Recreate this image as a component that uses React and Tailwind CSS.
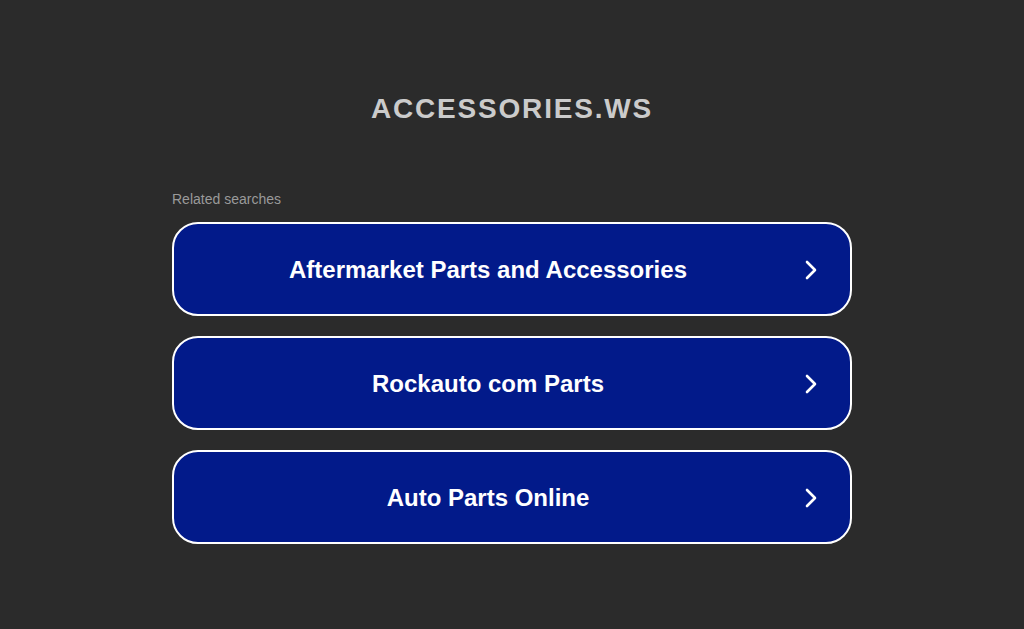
import React from 'react';

const SEARCHES = [
  'Aftermarket Parts and Accessories',
  'Rockauto com Parts',
  'Auto Parts Online',
];

const Chevron = () => (
  <svg width="14" height="22" viewBox="0 0 14 22" fill="none" className="shrink-0">
    <path d="M3 3l8 8-8 8" stroke="white" strokeWidth="2.6" strokeLinecap="round" strokeLinejoin="round" />
  </svg>
);

export default function App() {
  return (
    <div className="min-h-[629px] bg-[#2b2b2b] font-['Liberation_Sans',Arial,sans-serif]">
      <div className="pt-[92px] text-center">
        <h1 className="text-[28px] leading-[34px] font-bold tracking-[1.8px] text-[#cbcbcb]">ACCESSORIES.WS</h1>
      </div>
      <div className="mx-auto w-[680px] pt-[65px]">
        <p className="text-[14px] leading-[16px] text-[#9a9a9a]">Related searches</p>
        <div className="mt-[15px] flex flex-col gap-[20px]">
          {SEARCHES.map((s) => (
            <a
              key={s}
              href="#"
              className="flex h-[94px] items-center rounded-[26px] border-2 border-white bg-[#021a8a] pl-[48px] pr-[32px]"
            >
              <span className="flex-1 pt-[2px] text-center text-[24px] font-bold text-white">{s}</span>
              <span className="ml-[50px] pt-[2px]"><Chevron /></span>
            </a>
          ))}
        </div>
      </div>
    </div>
  );
}
